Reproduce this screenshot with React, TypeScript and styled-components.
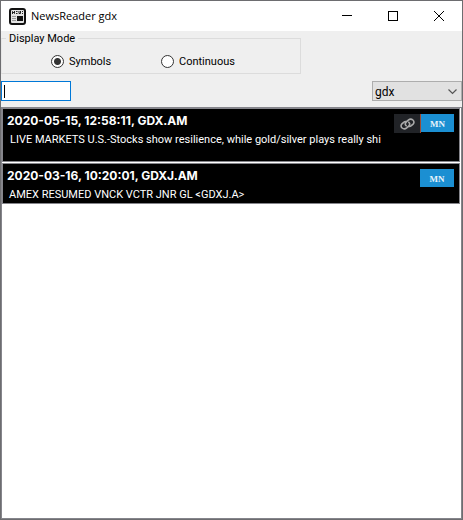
import React, { useState } from 'react';
import styled, { createGlobalStyle } from 'styled-components';

const GlobalStyle = createGlobalStyle`
  *, *::before, *::after { box-sizing: border-box; }
  body { margin: 0; background: #fff; }
`;

const uiFont = `Roboto, "Liberation Sans", sans-serif`;
const titleFont = `"Open Sans", "Liberation Sans", sans-serif`;
const stampFont = `Inter, "Liberation Sans", sans-serif`;

const Window = styled.div`
  display: flex;
  flex-direction: column;
  min-height: 100vh;
  border: 1px solid #6d6d70;
  background: #efefef;
  color: #000;
  font: 11px/14px ${uiFont};
`;

const TitleBar = styled.header`
  display: flex;
  align-items: center;
  height: 30px;
  padding-left: 8px;
  background: #fff;
`;

const Title = styled.h1`
  flex: 1;
  margin: 0 0 0 5px;
  font: 11px/16px ${titleFont};
  white-space: nowrap;
`;

const CaptionButton = styled.button`
  display: grid;
  place-items: center;
  width: 46px;
  height: 30px;
  padding: 0;
  border: 0;
  background: none;
  &:hover { background: #e5e5e5; }
`;

const ModeGroup = styled.fieldset`
  display: flex;
  width: 65%;
  min-width: 240px;
  height: 43px;
  margin: 0;
  padding: 9px 0 0 49px;
  border: 1px solid #dcdcdc;
  border-left-color: #e6e6e6;
`;

const Legend = styled.legend`
  height: 14px;
  margin-left: -45px;
  padding: 0 3px;
  line-height: 16px;
`;

const ModeOption = styled.label`
  display: flex;
  align-items: center;
  width: 110px;
  height: 14px;
  gap: 5px;
  line-height: 16px;
`;

const OptionText = styled.span`
  padding-top: 2px;
`;

const Radio = styled.input`
  appearance: none;
  flex: none;
  width: 13px;
  height: 13px;
  margin: 0;
  border: 1px solid #333;
  border-radius: 50%;
  background: #fff;
  outline: none;
  &:checked { background: radial-gradient(circle, #333 3px, #fff 4px); }
`;

const FilterBar = styled.div`
  display: flex;
  justify-content: space-between;
  padding: 7px 0 6px;
`;

const SearchInput = styled.input`
  width: 70px;
  height: 20px;
  padding: 0 3px;
  border: 1px solid #0078d7;
  border-radius: 0;
  background: #fff;
  font: inherit;
  outline: none;
  &:placeholder-shown {
    background: linear-gradient(#000, #000) 2px 3px / 1px 13px no-repeat #fff;
    caret-color: transparent;
  }
`;

const SelectBox = styled.div`
  display: grid;
  align-items: center;
  width: 90px;
  height: 20px;
  border: 1px solid #adadad;
  background: #e1e1e1;
  & > * { grid-area: 1 / 1; }
  & > svg { justify-self: end; margin: 2px 4px 0 0; pointer-events: none; }
`;

const Select = styled.select`
  appearance: none;
  width: 100%;
  height: 18px;
  padding: 2px 20px 0 2px;
  border: 0;
  background: none;
  color: #000;
  font: 12px/16px ${uiFont};
  outline: none;
`;

const NewsList = styled.ul`
  flex: 1;
  margin: 0;
  padding: 0 1px 0 0;
  border: 1px solid #85858b;
  background: #fff;
  list-style: none;
`;

const NewsItem = styled.li<{ $tall?: boolean }>`
  display: flex;
  align-items: flex-start;
  height: ${p => (p.$tall ? 54 : 41)}px;
  margin-bottom: 1px;
  padding: 5px 5px 0 4px;
  border: 1px solid #85858b;
  background: #000;
  color: #fff;
`;

const Story = styled.article`
  flex: 1;
  min-width: 0;
`;

const Stamp = styled.h2`
  margin: 0;
  font: bold 12px/14px ${stampFont};
  white-space: nowrap;
`;

const Headline = styled.p<{ $inset?: boolean }>`
  margin: 5px 0 0;
  padding-left: ${p => (p.$inset ? 3 : 2)}px;
  font: 11px/14px ${uiFont};
  white-space: nowrap;
`;

const Actions = styled.div`
  display: flex;
  width: 0;
  justify-content: flex-end;
`;

const LinkButton = styled.button`
  display: grid;
  flex: none;
  place-items: center;
  width: 27px;
  height: 19px;
  padding: 0;
  border: 0;
  border-right: 1px solid #a04a30;
  background: #212327;
`;

const SourceButton = styled.button<{ $narrow?: boolean }>`
  flex: none;
  width: ${p => (p.$narrow ? 33 : 34)}px;
  height: 18px;
  padding: 2px 0 0;
  border: 0;
  background: #1b8fd2;
  color: #e8f3fb;
  font: bold 9px/14px "Liberation Serif", serif;
`;

const AppIcon = () => (
  <svg width="17" height="17" viewBox="0 0 17 17" aria-hidden="true">
    <rect x="1" y="1" width="15" height="15" rx="2" fill="#e4e4e4" stroke="#111" strokeWidth="2" />
    <path d="M3.500 6V3.500L5.500 5.500V3M7 3.500h1.500M7 5.500h1.500M10 3v2.500h1.500V3M13 3.500h1M13 5.500h1" fill="none" stroke="#222" />
    <path d="M3 8.500h4M3 10.500h4M3 12.500h4" stroke="#999" />
    <rect x="8" y="8" width="6" height="5" fill="#111" />
  </svg>
);

const MinimizeIcon = () => (
  <svg width="10" height="10" stroke="#000" aria-hidden="true"><path d="M0 4.500h10" /></svg>
);
const MaximizeIcon = () => (
  <svg width="10" height="10" stroke="#000" fill="none" aria-hidden="true"><rect x=".5" y=".5" width="9" height="9" /></svg>
);
const CloseIcon = () => (
  <svg width="10" height="10" stroke="#000" aria-hidden="true"><path d="M0 0l10 10M10 0L0 10" /></svg>
);
const ChevronIcon = () => (
  <svg width="9" height="6" fill="none" stroke="#555" strokeWidth="1.2" aria-hidden="true"><path d="M.5 .5l4 4 4-4" /></svg>
);
const ChainIcon = () => (
  <svg width="15" height="12" viewBox="0 0 15 12" fill="none" stroke="#aaa" strokeWidth="1.6" strokeLinecap="round" aria-hidden="true">
    <path d="M6.200 7.800C5 6.600 5.200 5 6.300 3.900L8.300 2.100C9.600 1 11.600.9 12.900 2S14.300 4.900 13.100 6.100L11.300 7.700C10.600 8.300 9.700 8.500 8.900 8.400" />
    <path d="M8.800 4.200C10 5.400 9.800 7 8.700 8.100L6.700 9.900C5.400 11 3.400 11.100 2.100 10S.7 7.100 1.900 5.900L3.700 4.300C4.400 3.700 5.300 3.500 6.100 3.600" />
  </svg>
);

const stories = [
  { stamp: '2020-05-15, 12:58:11, GDX.AM', text: 'LIVE MARKETS U.S.-Stocks show resilience, while gold/silver plays really shi', linked: true },
  { stamp: '2020-03-16, 10:20:01, GDXJ.AM', text: 'AMEX RESUMED VNCK VCTR JNR GL <GDXJ.A>', linked: false },
];

export default function App() {
  const [mode, setMode] = useState('Symbols');
  return (
    <Window>
      <GlobalStyle />
      <TitleBar>
        <AppIcon />
        <Title>NewsReader gdx</Title>
        <CaptionButton aria-label="Minimize"><MinimizeIcon /></CaptionButton>
        <CaptionButton aria-label="Maximize"><MaximizeIcon /></CaptionButton>
        <CaptionButton aria-label="Close"><CloseIcon /></CaptionButton>
      </TitleBar>
      <ModeGroup>
        <Legend>Display Mode</Legend>
        {['Symbols', 'Continuous'].map(name => (
          <ModeOption key={name}>
            <Radio type="radio" name="mode" checked={mode === name} onChange={() => setMode(name)} />
            <OptionText>{name}</OptionText>
          </ModeOption>
        ))}
      </ModeGroup>
      <FilterBar>
        <SearchInput type="text" aria-label="Symbol" placeholder=" " autoFocus />
        <SelectBox>
          <Select aria-label="Symbol list" defaultValue="gdx"><option>gdx</option></Select>
          <ChevronIcon />
        </SelectBox>
      </FilterBar>
      <NewsList>
        {stories.map(s => (
          <NewsItem key={s.stamp} $tall={s.linked}>
            <Story>
              <Stamp>{s.stamp}</Stamp>
              <Headline $inset={s.linked}>{s.text}</Headline>
            </Story>
            <Actions>
              {s.linked && <LinkButton aria-label="Open link"><ChainIcon /></LinkButton>}
              <SourceButton $narrow={s.linked}>MN</SourceButton>
            </Actions>
          </NewsItem>
        ))}
      </NewsList>
    </Window>
  );
}
